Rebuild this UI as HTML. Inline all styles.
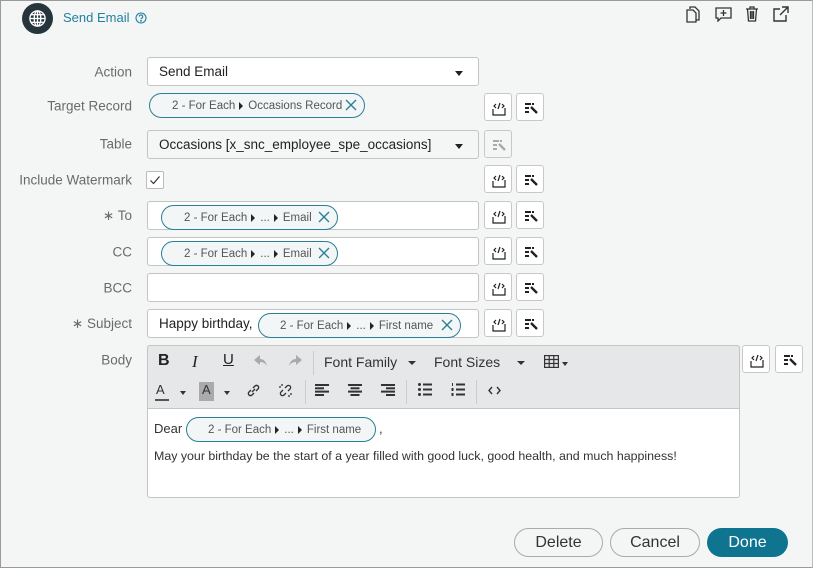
<!DOCTYPE html>
<html><head><meta charset="utf-8">
<style>
*{box-sizing:border-box;margin:0;padding:0}
body{width:813px;height:568px;background:#f4f6f6;font-family:"Liberation Sans",sans-serif;color:#2e2e2e;position:relative;overflow:hidden}
.frame{position:absolute;left:0;top:0;width:813px;height:568px;border:1px solid #9a9a9a;border-right-color:#bbb}
.a{position:absolute}
.lbl{position:absolute;right:681px;font-size:13.5px;color:#6a6a6a;white-space:nowrap;transform:translateY(-50%)}
.inp{position:absolute;left:147px;width:332px;height:29px;background:#fff;border:1px solid #c4c4c4;border-radius:3px;font-size:13.5px;color:#222}
.pill{position:absolute;height:25px;border:1.5px solid #2a7f95;border-radius:13px;background:#f3f6f7;font-size:11.5px;color:#555;display:flex;align-items:center;white-space:nowrap}
.tri{display:inline-block;width:0;height:0;border-top:4px solid transparent;border-bottom:4px solid transparent;border-left:4px solid #222;margin:0 5px 0 4px}
.x{position:absolute;right:5px;top:3px}
.btn{position:absolute;width:28px;height:28px;border:1px solid #c8c8c8;border-radius:3px;background:#fff}
.btn svg{position:absolute;left:6px;top:6px}
.caret{position:absolute;width:0;height:0;border-left:4.5px solid transparent;border-right:4.5px solid transparent;border-top:5px solid #222}
.pb{position:absolute;top:528px;height:29px;border-radius:15px;font-size:16px;display:flex;align-items:center;justify-content:center}
</style></head><body>
<div class="frame"></div>

<div class="a" style="left:22px;top:3px;width:31px;height:31px;border-radius:50%;background:#26343c"></div>
<svg class="a" style="left:28px;top:9px" width="19" height="19" viewBox="0 0 20 20" fill="none" stroke="#fff" stroke-width="1.4"><circle cx="10" cy="10" r="8"/><ellipse cx="10" cy="10" rx="3.5" ry="8"/><line x1="2" y1="10" x2="18" y2="10"/><line x1="3" y1="6" x2="17" y2="6"/><line x1="3" y1="14" x2="17" y2="14"/><line x1="10" y1="2" x2="10" y2="18"/></svg>
<div class="a" style="left:63px;top:10px;font-size:13px;color:#2280a0">Send Email</div>
<svg class="a" style="left:135px;top:12px" width="12" height="12" viewBox="0 0 12 12" fill="none" stroke="#2280a0" stroke-width="1.1"><circle cx="6" cy="6" r="5"/><path d="M4.3 4.6a1.7 1.7 0 1 1 2.3 1.6c-.5.2-.6.5-.6 1"/><circle cx="6" cy="8.8" r=".4" fill="#2280a0"/></svg>

<svg class="a" style="left:686px;top:6px" width="14" height="17" viewBox="0 0 14 17" fill="none" stroke="#333" stroke-width="1.3"><path d="M4 3V1h5l4 4v9h-3"/><path d="M1 4h6l3 3v9H1z"/></svg>
<svg class="a" style="left:715px;top:7px" width="17" height="15" viewBox="0 0 17 15" fill="none" stroke="#333" stroke-width="1.3"><path d="M1 1h15v10H6l-3 3v-3H1z"/><path d="M8.5 3v6M5.5 6h6"/></svg>
<svg class="a" style="left:745px;top:6px" width="14" height="16" viewBox="0 0 14 16" fill="none" stroke="#333" stroke-width="1.3"><path d="M1 3h12M5 3V1h4v2M2.5 3l1 12h7l1-12M5.5 5v8M7 5v8M8.5 5v8"/></svg>
<svg class="a" style="left:773px;top:6px" width="16" height="16" viewBox="0 0 16 16" fill="none" stroke="#333" stroke-width="1.4"><path d="M7 3H1v12h12V9"/><path d="M9 1h6v6M15 1L7 9"/></svg>

<div class="lbl" style="top:72px">Action</div>
<div class="lbl" style="top:106px">Target Record</div>
<div class="lbl" style="top:144px">Table</div>
<div class="lbl" style="top:180px">Include Watermark</div>
<div class="lbl" style="top:216px">∗ To</div>
<div class="lbl" style="top:252px">CC</div>
<div class="lbl" style="top:288px">BCC</div>
<div class="lbl" style="top:324px">∗ Subject</div>
<div class="lbl" style="top:360px">Body</div>

<div class="inp" style="top:57px"><span class="a" style="left:11px;top:6px">Send Email</span><div class="caret" style="left:307px;top:13px"></div></div>

<div class="pill" style="left:149px;top:93px;width:216px;padding-left:22px">2 - For Each<span class="tri"></span>Occasions Record
<svg class="x" width="16" height="16" viewBox="0 0 16 16" stroke="#2a7f95" stroke-width="1.4"><path d="M3 3l10 10M13 3L3 13"/></svg></div>

<div class="inp" style="top:130px;background:#f4f5f5"><span class="a" style="left:11px;top:6px">Occasions [x_snc_employee_spe_occasions]</span><div class="caret" style="left:307px;top:13px"></div></div>

<div class="a" style="left:146px;top:171px;width:18px;height:18px;border:1px solid #bbb;border-radius:2px;background:#fff"></div>
<svg class="a" style="left:149px;top:174px" width="12" height="12" viewBox="0 0 12 12" fill="none" stroke="#333" stroke-width="1.2"><path d="M1.5 6.5l3 3 6-7"/></svg>

<div class="inp" style="top:201px"></div>
<div class="pill" style="left:161px;top:205px;width:177px;padding-left:22px">2 - For Each<span class="tri"></span>...<span class="tri"></span>Email
<svg class="x" width="16" height="16" viewBox="0 0 16 16" stroke="#2a7f95" stroke-width="1.4"><path d="M3 3l10 10M13 3L3 13"/></svg></div>
<div class="inp" style="top:237px"></div>
<div class="pill" style="left:161px;top:241px;width:177px;padding-left:22px">2 - For Each<span class="tri"></span>...<span class="tri"></span>Email
<svg class="x" width="16" height="16" viewBox="0 0 16 16" stroke="#2a7f95" stroke-width="1.4"><path d="M3 3l10 10M13 3L3 13"/></svg></div>
<div class="inp" style="top:273px"></div>

<div class="inp" style="top:309px"><span class="a" style="left:11px;top:6px">Happy birthday,</span></div>
<div class="pill" style="left:258px;top:313px;width:203px;padding-left:21px">2 - For Each<span class="tri"></span>...<span class="tri"></span>First name
<svg class="x" width="16" height="16" viewBox="0 0 16 16" stroke="#2a7f95" stroke-width="1.4"><path d="M3 3l10 10M13 3L3 13"/></svg></div>

<svg width="0" height="0" style="position:absolute"><defs>
<g id="dp" fill="none" stroke="#222" stroke-width="1.2"><path d="M2 9v6h12V8"/><path d="M5 4L3 6l2 2M11 4l2 2-2 2M9 3L7 9"/></g>
<g id="pk"><rect x="2" y="3" width="6" height="2" fill="#222"/><rect x="2" y="7" width="4" height="2" fill="#222"/><rect x="2" y="11" width="4" height="2" fill="#222"/><rect x="9" y="3" width="2" height="2" fill="#222"/><path d="M8 7l6 6" stroke="#222" stroke-width="2.4"/></g>
<g id="pkg"><rect x="2" y="3" width="6" height="2" fill="#aaa"/><rect x="2" y="7" width="4" height="2" fill="#aaa"/><rect x="2" y="11" width="4" height="2" fill="#aaa"/><rect x="9" y="3" width="2" height="2" fill="#aaa"/><path d="M8 7l6 6" stroke="#aaa" stroke-width="2.4"/></g>
</defs></svg>
<div class="btn" style="left:484px;top:93px"><svg width="16" height="16"><use href="#dp"/></svg></div>
<div class="btn" style="left:516px;top:93px"><svg width="16" height="16"><use href="#pk"/></svg></div>
<div class="btn" style="left:484px;top:130px;background:#f4f5f5"><svg width="16" height="16"><use href="#pkg"/></svg></div>
<div class="btn" style="left:484px;top:165px"><svg width="16" height="16"><use href="#dp"/></svg></div>
<div class="btn" style="left:516px;top:165px"><svg width="16" height="16"><use href="#pk"/></svg></div>
<div class="btn" style="left:484px;top:201px"><svg width="16" height="16"><use href="#dp"/></svg></div>
<div class="btn" style="left:516px;top:201px"><svg width="16" height="16"><use href="#pk"/></svg></div>
<div class="btn" style="left:484px;top:237px"><svg width="16" height="16"><use href="#dp"/></svg></div>
<div class="btn" style="left:516px;top:237px"><svg width="16" height="16"><use href="#pk"/></svg></div>
<div class="btn" style="left:484px;top:273px"><svg width="16" height="16"><use href="#dp"/></svg></div>
<div class="btn" style="left:516px;top:273px"><svg width="16" height="16"><use href="#pk"/></svg></div>
<div class="btn" style="left:484px;top:309px"><svg width="16" height="16"><use href="#dp"/></svg></div>
<div class="btn" style="left:516px;top:309px"><svg width="16" height="16"><use href="#pk"/></svg></div>
<div class="btn" style="left:742px;top:345px"><svg width="16" height="16"><use href="#dp"/></svg></div>
<div class="btn" style="left:775px;top:345px"><svg width="16" height="16"><use href="#pk"/></svg></div>

<div class="a" style="left:147px;top:345px;width:593px;height:153px;border:1px solid #c4c4c4;border-radius:3px;background:#fff"></div>
<div class="a" style="left:147px;top:345px;width:593px;height:64px;background:#e6e7e8;border:1px solid #c4c4c4;border-radius:3px 3px 0 0"></div>
<div class="a" style="left:313px;top:351px;width:1px;height:24px;background:#ccc"></div>
<div class="a" style="left:305px;top:380px;width:1px;height:24px;background:#ccc"></div>
<div class="a" style="left:406px;top:380px;width:1px;height:24px;background:#ccc"></div>
<div class="a" style="left:476px;top:380px;width:1px;height:24px;background:#ccc"></div>
<div class="a" style="left:158px;top:352px;font-size:16px;font-weight:bold;color:#222">B</div>
<div class="a" style="left:192px;top:352px;font-size:17px;font-style:italic;font-family:'Liberation Serif',serif;color:#222">I</div>
<div class="a" style="left:223px;top:351px;font-size:15px;text-decoration:underline;color:#222">U</div>
<svg class="a" style="left:254px;top:355px" width="14" height="12" viewBox="0 0 14 12" fill="#aaa"><path d="M6 0L0 5l6 5V7c3 0 5 1 7 4-1-4-3-7-7-7z"/></svg>
<svg class="a" style="left:288px;top:355px" width="14" height="12" viewBox="0 0 14 12" fill="#aaa"><path d="M8 0l6 5-6 5V7c-3 0-5 1-7 4 1-4 3-7 7-7z"/></svg>
<div class="a" style="left:324px;top:354px;font-size:14px;color:#333">Font Family</div>
<div class="caret" style="left:408px;top:361px;border-width:4px 4px 0;border-top-color:#333"></div>
<div class="a" style="left:434px;top:354px;font-size:14px;color:#333">Font Sizes</div>
<div class="caret" style="left:517px;top:361px;border-width:4px 4px 0;border-top-color:#333"></div>
<svg class="a" style="left:544px;top:355px" width="15" height="13" viewBox="0 0 15 13" fill="none" stroke="#333" stroke-width="1.2"><rect x=".6" y=".6" width="13.8" height="11.8"/><path d="M.6 4.5h14M.6 8.5h14M5.2 .6v12M9.8 .6v12"/></svg>
<div class="caret" style="left:562px;top:362px;border-width:4px 3.5px 0;border-top-color:#333"></div>
<div class="a" style="left:156px;top:382px;font-size:13px;color:#333">A</div>
<div class="a" style="left:155px;top:399px;width:14px;height:2px;background:#555"></div>
<div class="caret" style="left:180px;top:391px;border-width:4px 3.5px 0;border-top-color:#333"></div>
<div class="a" style="left:199px;top:382px;width:15px;height:19px;background:#aaa"></div>
<div class="a" style="left:202px;top:382px;font-size:13px;color:#333">A</div>
<div class="caret" style="left:224px;top:391px;border-width:4px 3.5px 0;border-top-color:#333"></div>
<svg class="a" style="left:246px;top:383px" width="15" height="15" viewBox="0 0 15 15" fill="none" stroke="#333" stroke-width="1.4"><path d="M6 9l3-3M5 7L3 9a2 2 0 0 0 3 3l2-2M10 8l2-2a2 2 0 0 0-3-3L7 5"/></svg>
<svg class="a" style="left:278px;top:383px" width="15" height="15" viewBox="0 0 15 15" fill="none" stroke="#333" stroke-width="1.3"><path d="M5 7L3 9a2 2 0 0 0 3 3l2-2M10 8l2-2a2 2 0 0 0-3-3L7 5M1 4h2M4 1v2M11 12v2M12 11h2"/></svg>
<svg class="a" style="left:315px;top:384px" width="14" height="12" viewBox="0 0 14 12" fill="#333"><rect width="14" height="2"/><rect y="3.3" width="9" height="2"/><rect y="6.6" width="14" height="2"/><rect y="10" width="9" height="2"/></svg>
<svg class="a" style="left:348px;top:384px" width="14" height="12" viewBox="0 0 14 12" fill="#333"><rect width="14" height="2"/><rect x="2.5" y="3.3" width="9" height="2"/><rect y="6.6" width="14" height="2"/><rect x="2.5" y="10" width="9" height="2"/></svg>
<svg class="a" style="left:381px;top:384px" width="14" height="12" viewBox="0 0 14 12" fill="#333"><rect width="14" height="2"/><rect x="5" y="3.3" width="9" height="2"/><rect y="6.6" width="14" height="2"/><rect x="5" y="10" width="9" height="2"/></svg>
<svg class="a" style="left:418px;top:383px" width="14" height="13" viewBox="0 0 14 13" fill="#333"><circle cx="1.5" cy="1.5" r="1.5"/><circle cx="1.5" cy="6.5" r="1.5"/><circle cx="1.5" cy="11.5" r="1.5"/><rect x="5" y=".5" width="9" height="2"/><rect x="5" y="5.5" width="9" height="2"/><rect x="5" y="10.5" width="9" height="2"/></svg>
<svg class="a" style="left:451px;top:383px" width="14" height="13" viewBox="0 0 14 13" fill="#333"><rect x="1" y="0" width="1" height="3"/><rect x=".5" y="5" width="2" height="3"/><rect x=".5" y="10" width="2" height="3"/><rect x="5" y=".5" width="9" height="2"/><rect x="5" y="5.5" width="9" height="2"/><rect x="5" y="10.5" width="9" height="2"/></svg>
<svg class="a" style="left:488px;top:386px" width="13" height="9" viewBox="0 0 13 9" fill="none" stroke="#333" stroke-width="1.4"><path d="M4 1L1 4.5 4 8M9 1l3 3.5L9 8"/></svg>

<div class="a" style="left:154px;top:421px;font-size:13px;color:#333">Dear</div>
<div class="pill" style="left:186px;top:417px;width:190px;padding-left:21px">2 - For Each<span class="tri"></span>...<span class="tri"></span>First name</div>
<div class="a" style="left:379px;top:421px;font-size:13px;color:#333">,</div>
<div class="a" style="left:154px;top:449px;font-size:12.4px;color:#333;white-space:nowrap">May your birthday be the start of a year filled with good luck, good health, and much happiness!</div>

<div class="pb" style="left:514px;width:89px;border:1px solid #aaa;background:#f4f6f6;color:#333">Delete</div>
<div class="pb" style="left:610px;width:90px;border:1px solid #aaa;background:#f4f6f6;color:#333">Cancel</div>
<div class="pb" style="left:707px;width:81px;background:#0e7490;color:#fff">Done</div>
</body></html>
